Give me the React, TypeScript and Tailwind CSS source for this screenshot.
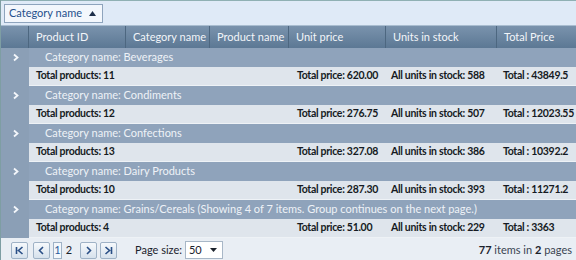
import React from "react";

type Group = {
  name: string;
  products: number;
  price: string;
  units: number;
  total: string;
};

const groups: Group[] = [
  { name: "Beverages", products: 11, price: "620.00", units: 588, total: "43849.5" },
  { name: "Condiments", products: 12, price: "276.75", units: 507, total: "12023.55" },
  { name: "Confections", products: 13, price: "327.08", units: 386, total: "10392.2" },
  { name: "Dairy Products", products: 10, price: "287.30", units: 393, total: "11271.2" },
  {
    name: "Grains/Cereals (Showing 4 of 7 items. Group continues on the next page.)",
    products: 4,
    price: "51.00",
    units: 229,
    total: "3363",
  },
];

const cols = "grid grid-cols-[28px_97px_84px_79px_97px_111px_80px]";

function Chevron() {
  return (
    <svg width="8" height="9" viewBox="0 0 8 9">
      <path d="M2 1.5 L5.5 4.5 L2 7.5" fill="none" stroke="#f4f7fb" strokeWidth="1.8" />
    </svg>
  );
}

function PagerButton({ children }: { children: React.ReactNode }) {
  return (
    <div className="w-[17px] h-[17px] flex items-center justify-center border border-[#9fb2c6] rounded-[2px] bg-gradient-to-b from-[#f6f9fc] to-[#d6e1ec]">
      {children}
    </div>
  );
}

export default function App() {
  return (
    <div
      className="w-[576px] h-[260px] overflow-hidden bg-[#e9eef4] border-l border-[#7e9ea3] text-[11px]"
      style={{ fontFamily: 'Lato, "Open Sans", sans-serif' }}
    >
      {/* group panel */}
      <div className="h-[26px] bg-[#dfeaf7] border-t border-[#8fb0b3] border-b border-b-[#a9bdd0] flex items-center px-[3px]">
        <div className="h-[19px] flex items-center gap-[7px] pl-[4px] pr-[6px] bg-[#f3f7fc] border border-[#8ea4bd] text-[#25508c]">
          <span>Category name</span>
          <svg width="7" height="5" viewBox="0 0 7 5">
            <path d="M0 5 L3.5 0 L7 5 Z" fill="#1e2f4a" />
          </svg>
        </div>
      </div>

      {/* header */}
      <div className={`${cols} h-[22px] bg-gradient-to-b from-[#7a93ad] to-[#5c7894] text-[#f2f5f9]`}>
        <div className="border-r border-[#4d6780]" />
        {["Product ID", "Category name", "Product name", "Unit price", "Units in stock", "Total Price"].map((h) => (
          <div key={h} className="flex items-center pl-[7px] border-r border-[#4d6780] whitespace-nowrap">
            {h}
          </div>
        ))}
      </div>

      {/* rows */}
      {groups.map((g) => (
        <div key={g.name}>
          <div className={`${cols} h-[19px] bg-[#8fa3bb] text-[#eef2f7]`}>
            <div className="flex items-center pl-[11px] bg-[#8b9fb6]">
              <Chevron />
            </div>
            <div className="col-span-6 flex items-center pl-[16px] whitespace-nowrap">
              Category name: {g.name}
            </div>
          </div>
          <div className={`${cols} h-[19px] text-[#151a22] font-bold text-[10.5px] tracking-[-0.3px]`}>
            <div className="bg-[#8b9fb6]" />
            <div className="col-span-3 flex items-center pl-[7px] bg-[#dfe5ec] border-b border-[#eef2f6]">
              Total products: {g.products}
            </div>
            <div className="flex items-center pl-[8px] bg-[#dfe5ec] border-b border-[#eef2f6] whitespace-nowrap">
              Total price: {g.price}
            </div>
            <div className="flex items-center pl-[5px] bg-[#dfe5ec] border-b border-[#eef2f6] whitespace-nowrap">
              All units in stock: {g.units}
            </div>
            <div className="flex items-center pl-[6px] bg-[#dfe5ec] border-b border-[#eef2f6] whitespace-nowrap">
              Total : {g.total}
            </div>
          </div>
        </div>
      ))}

      {/* pager */}
      <div className="h-[22px] flex items-end pb-[1px] pl-[10px] pr-[4px] text-[#1b222c]">
        <div className="flex items-center">
          <PagerButton>
            <svg width="9" height="9" viewBox="0 0 9 9">
              <path d="M1.5 1 V8 M7.5 1 L3.5 4.5 L7.5 8" fill="none" stroke="#2a4f86" strokeWidth="1.6" />
            </svg>
          </PagerButton>
          <div className="ml-[5px]">
            <PagerButton>
              <svg width="9" height="9" viewBox="0 0 9 9">
                <path d="M6 1 L2.5 4.5 L6 8" fill="none" stroke="#2a4f86" strokeWidth="1.6" />
              </svg>
            </PagerButton>
          </div>
          <div className="ml-[3px] h-[17px] w-[9px] flex items-center justify-center border border-[#9fb2c6] bg-[#f3f7fb] text-[#2a5c9c]">
            1
          </div>
          <div className="w-[14px] h-[17px] flex items-center justify-center">2</div>
          <div className="ml-[4px]">
            <PagerButton>
              <svg width="9" height="9" viewBox="0 0 9 9">
                <path d="M3 1 L6.5 4.5 L3 8" fill="none" stroke="#2a4f86" strokeWidth="1.6" />
              </svg>
            </PagerButton>
          </div>
          <div className="ml-[3px]">
            <PagerButton>
              <svg width="9" height="9" viewBox="0 0 9 9">
                <path d="M1.5 1 L5.5 4.5 L1.5 8 M7.5 1 V8" fill="none" stroke="#2a4f86" strokeWidth="1.6" />
              </svg>
            </PagerButton>
          </div>
        </div>
        <div className="flex items-center ml-[18px] gap-[3px]">
          <span>Page size:</span>
          <div className="w-[38px] h-[18px] flex items-center justify-between pl-[3px] pr-[5px] bg-white border border-[#a8b7c7]">
            <span>50</span>
            <svg width="7" height="4" viewBox="0 0 7 4">
              <path d="M0 0 H7 L3.5 4 Z" fill="#1b222c" />
            </svg>
          </div>
        </div>
        <div className="ml-auto h-[17px] flex items-center text-[#3a4452]">
          <span className="font-bold text-[#1b222c]">77</span>&nbsp;items in&nbsp;
          <span className="font-bold text-[#1b222c]">2</span>&nbsp;pages
        </div>
      </div>
    </div>
  );
}
